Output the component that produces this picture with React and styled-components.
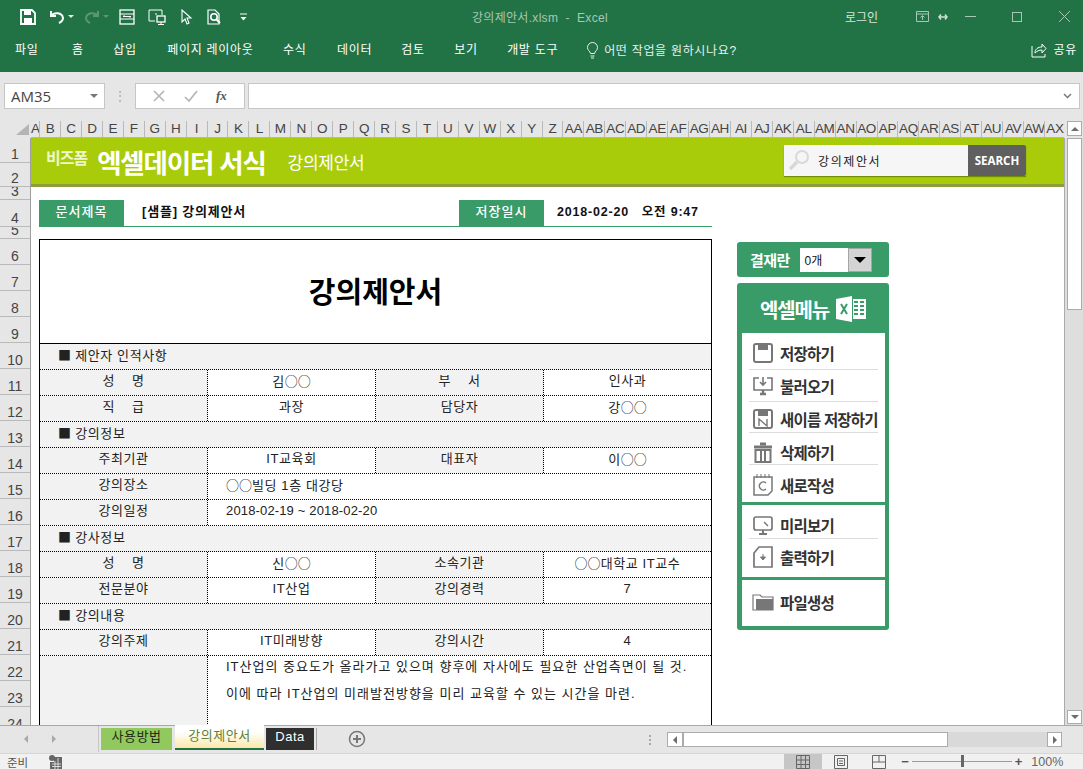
import React from "react";
import styled, { createGlobalStyle } from "styled-components";

const KR = `"Liberation Sans", "Noto Sans CJK KR", sans-serif`;
const GREEN = "#217346";
const SHEET_GREEN = "#389b68";

const GlobalStyle = createGlobalStyle`
  html, body { margin: 0; padding: 0; background: #fff; }
  * { box-sizing: border-box; }
  body { font-family: ${KR}; font-size: 12px; color: #111; }
`;

const Window = styled.div`
  width: 1083px;
  height: 769px;
  display: flex;
  flex-direction: column;
  overflow: hidden;
`;

/* title bar */
const TitleBar = styled.div`
  height: 33px;
  flex: none;
  background: ${GREEN};
  display: grid;
  grid-template-columns: 472px 373px 71px 1fr;
  align-items: center;
`;
const QuickBar = styled.div`
  display: flex;
  align-items: center;
  padding-left: 20px;
  gap: 13px;
`;
const Caret = styled.span`
  width: 0;
  height: 0;
  margin: 0 -3px 0 -10px;
  border: 3px solid transparent;
  border-top: 3px solid ${(p) => (p.$dim ? "#5c9676" : "#e6f0ea")};
  border-bottom: 0;
`;
const Customize = styled.span`
  display: flex;
  margin-left: 5px;
`;
const DocName = styled.div`
  color: #a8c7b5;
  font-size: 12px;
  letter-spacing: 0.3px;
  white-space: pre;
`;
const Login = styled.div`
  color: #d5e5dc;
  font-size: 12px;
`;
const WinControls = styled.div`
  display: flex;
  align-items: center;
  position: relative;
  height: 33px;
`;
const WinBtn = styled.span`
  display: flex;
  width: ${(p) => p.$w}px;
  color: #a8c7b5;
`;

/* ribbon tabs */
const RibbonBar = styled.div`
  height: 39px;
  flex: none;
  background: ${GREEN};
  display: flex;
  align-items: flex-start;
  padding: 9px 6px 0 15px;
  color: #fff;
  font-size: 12px;
  line-height: 16px;
  letter-spacing: 0.7px;
`;
const RibbonTab = styled.span`
  margin-right: ${(p) => p.$gap ?? 29.5}px;
  white-space: nowrap;
`;
const TellMe = styled.span`
  display: flex;
  align-items: center;
  gap: 5px;
  color: #e8f1ec;
`;
const Share = styled.span`
  margin-left: auto;
  display: flex;
  align-items: center;
  gap: 7px;
`;

/* formula bar */
const FormulaBar = styled.div`
  height: 48px;
  flex: none;
  background: #e6e6e6;
  display: flex;
  padding: 11px 3px 11px 4px;
  align-items: stretch;
`;
const NameBox = styled.div`
  width: 101px;
  background: #fff;
  border: 1px solid #c6c6c6;
  display: flex;
  align-items: center;
  justify-content: space-between;
  padding: 0 6px;
  font: 15px "Open Sans", sans-serif;
  color: #444;
`;
const SmallArrow = styled.span`
  width: 0;
  height: 0;
  border: 4px solid transparent;
  border-top: 4px solid #777;
  border-bottom: 0;
`;
const Grip = styled.div`
  width: 30px;
  display: flex;
  justify-content: center;
  align-items: center;
  color: #aaa;
  font-size: 12px;
`;
const FxBox = styled.div`
  width: 110px;
  background: #fff;
  border: 1px solid #c6c6c6;
  display: flex;
  align-items: center;
  justify-content: space-around;
  padding: 0 8px;
  margin-right: 3px;
`;
const FxMark = styled.span`
  font: italic bold 13px "Liberation Serif", serif;
  color: #555;
`;
const FormulaInput = styled.div`
  flex: 1;
  background: #fff;
  border: 1px solid #c6c6c6;
  display: flex;
  align-items: center;
  justify-content: flex-end;
  padding-right: 7px;
`;

/* column header */
const ColHeader = styled.div`
  height: 18px;
  flex: none;
  display: flex;
  background: #e6e6e6;
`;
const Corner = styled.div`
  width: 31px;
  flex: none;
  display: flex;
  justify-content: flex-end;
  align-items: flex-end;
  padding: 0 2px 3px 0;
`;
const ColTrack = styled.div`
  width: 1033px;
  flex: none;
  display: flex;
  overflow: hidden;
  padding-top: 1px;
  border-bottom: 1px solid #b5b5b5;
`;
const ColCell = styled.div`
  width: ${(p) => p.$w}px;
  flex: none;
  border-right: 1px solid #b9b9b9;
  font: 13.5px/16px "Liberation Sans", sans-serif;
  color: #444;
  text-align: center;
  letter-spacing: -0.4px;
  overflow: hidden;
  white-space: nowrap;
`;
const HeaderEnd = styled.div`
  flex: 1;
  padding: 1px 0 0 3px;
  background: #e6e6e6;
`;

/* sheet area */
const SheetArea = styled.div`
  height: 587px;
  flex: none;
  display: flex;
  overflow: hidden;
`;
const RowHeader = styled.div`
  width: 31px;
  flex: none;
  background: #e6e6e6;
  border-right: 1px solid #9f9f9f;
  overflow: hidden;
`;
const RowCell = styled.div`
  height: ${(p) => p.$h}px;
  border-bottom: 1px solid #b9b9b9;
  display: flex;
  align-items: flex-end;
  justify-content: center;
  overflow: hidden;
  font: 14px/16px "Liberation Sans", sans-serif;
  color: #444;
`;
const Sheet = styled.div`
  width: 1033px;
  flex: none;
  background: #fff;
  overflow: hidden;
  display: flex;
  flex-direction: column;
`;
const Banner = styled.div`
  height: 49px;
  flex: none;
  background: #a8cc0a;
  border-bottom: 3px solid #8d9c3c;
  display: flex;
  align-items: center;
  padding: 0 38px 2px 15px;
  color: #fff;
`;
const BrandSmall = styled.span`
  font-size: 16px;
  font-weight: 700;
  color: #eef7c8;
  margin: -6px 10px 0 0;
  letter-spacing: -1px;
`;
const BrandBig = styled.span`
  font-size: 26.5px;
  font-weight: 700;
  letter-spacing: -1.2px;
  margin-top: 2px;
  margin-right: 22px;
`;
const BrandSub = styled.span`
  font-size: 17px;
  letter-spacing: -0.3px;
  margin-top: 3px;
`;
const Search = styled.div`
  margin-left: auto;
  display: flex;
  height: 31px;
  width: 242px;
  box-shadow: 0 1px 1px rgba(0, 0, 0, 0.3);
`;
const SearchField = styled.div`
  flex: 1;
  background: #f6f6f6;
  display: flex;
  align-items: center;
  gap: 8px;
  padding-left: 4px;
  color: #222;
  font-size: 12px;
  letter-spacing: 1.6px;
`;
const SearchButton = styled.div`
  width: 58px;
  background: #5f5f5f;
  color: #fff;
  font: bold 11.5px/31px "Open Sans", sans-serif;
  text-align: center;
  border-radius: 0 2px 2px 0;
`;
const Body = styled.div`
  display: flex;
  padding: 13px 0 0 8px;
`;
const LeftCol = styled.div`
  width: 673px;
  flex: none;
`;
const DocBar = styled.div`
  height: 27px;
  display: flex;
  align-items: flex-start;
  border-bottom: 1px solid ${SHEET_GREEN};
  margin-bottom: 12px;
  font-weight: 700;
  font-size: 13px;
  line-height: 24px;
`;
const DocLabel = styled.div`
  width: 85px;
  height: 26px;
  background: ${SHEET_GREEN};
  color: #fff;
  text-align: center;
  line-height: 24px;
  font-weight: 500;
  font-size: 13px;
  letter-spacing: 1px;
`;
const DocTitle = styled.div`
  width: 335px;
  padding-left: 18px;
  letter-spacing: 0.8px;
`;
const DocDate = styled.div`
  padding-left: 13px;
  white-space: pre;
  font-size: 12.5px;
  letter-spacing: 0.8px;
`;
const Form = styled.div`
  width: 673px;
  border: 1px solid #000;
  border-bottom: 0;
  height: 600px;
  font-size: 13px;
  letter-spacing: 0.6px;
`;
const FormTitle = styled.div`
  height: 104px;
  border-bottom: 1px solid #000;
  display: flex;
  align-items: center;
  justify-content: center;
  font-size: 29px;
  font-weight: 700;
  letter-spacing: 0;
  color: #000;
  padding-bottom: 3px;
`;
const Section = styled.div`
  height: 26px;
  background: #f2f2f2;
  border-bottom: 1px dotted #000;
  padding-left: 18px;
  line-height: 22px;
  white-space: pre;
  color: #222;
`;
const Mark = styled.span`
  font-family: "Noto Sans CJK KR", sans-serif;
  letter-spacing: 0;
`;
const Row = styled.div`
  display: grid;
  grid-template-columns: 168px 168px 168px 1fr;
  height: 26px;
  border-bottom: 1px dotted #000;
`;
const Cell = styled.div`
  grid-column: span ${(p) => p.$span ?? 1};
  background: ${(p) => (p.$label ? "#f2f2f2" : "#fff")};
  border-right: ${(p) => (p.$last ? "0" : "1px dotted #000")};
  text-align: ${(p) => (p.$left ? "left" : "center")};
  padding-left: ${(p) => (p.$left ? "18px" : "0")};
  line-height: 22px;
  white-space: pre;
  color: #222;
  letter-spacing: ${(p) => (p.$tight ? "0.15px" : "inherit")};
`;
const LongRow = styled.div`
  display: grid;
  grid-template-columns: 168px 1fr;
  height: 200px;
`;
const LongLabel = styled.div`
  background: #f2f2f2;
  border-right: 1px dotted #000;
`;
const LongText = styled.div`
  margin-top: -3px;
  padding-left: 18px;
  line-height: 27px;
  letter-spacing: 1px;
  color: #222;
  white-space: nowrap;
`;

/* right panel */
const RightCol = styled.div`
  width: 152px;
  flex: none;
  margin-left: 25px;
  padding-top: 42px;
  display: flex;
  flex-direction: column;
  gap: 6px;
`;
const Approval = styled.div`
  height: 35px;
  background: ${SHEET_GREEN};
  border-radius: 3px;
  display: flex;
  align-items: center;
  padding-left: 13px;
  gap: 9px;
  color: #fff;
  font-weight: 700;
  font-size: 15px;
  letter-spacing: -0.6px;
`;
const Combo = styled.div`
  width: 72px;
  height: 24px;
  margin-left: 1px;
  background: #fff;
  display: flex;
  justify-content: space-between;
  align-items: center;
  padding-left: 5px;
  color: #111;
  font-weight: 400;
  font-size: 12px;
  letter-spacing: 0;
`;
const ComboBtn = styled.div`
  width: 24px;
  height: 24px;
  background: #d4d4d4;
  border: 1px solid #a5a5a5;
  display: flex;
  align-items: center;
  justify-content: center;
`;
const ComboArrow = styled.span`
  width: 0;
  height: 0;
  border: 6px solid transparent;
  border-top: 6px solid #000;
  border-bottom: 0;
`;
const Menu = styled.div`
  height: 347px;
  background: ${SHEET_GREEN};
  border-radius: 3px;
  padding: 0 4px 4px 5px;
  display: flex;
  flex-direction: column;
  gap: 3px;
`;
const MenuHead = styled.div`
  height: 50px;
  flex: none;
  margin-bottom: -3px;
  display: flex;
  align-items: center;
  justify-content: center;
  gap: 7px;
  color: #fff;
  font-size: 20px;
  font-weight: 700;
  letter-spacing: -1.2px;
  padding: 2px 1px 0 0;
`;
const MenuGroup = styled.div`
  background: #fff;
  display: flex;
  flex-direction: column;
  padding: 0 7px;
  height: ${(p) => p.$h}px;
  flex: none;
`;
const MenuItem = styled.div`
  height: ${(p) => p.$h}px;
  flex: none;
  display: flex;
  align-items: center;
  gap: 6px;
  border-bottom: ${(p) => (p.$end ? "0" : "1px solid #dcdcdc")};
  color: #333;
  font-size: 15.5px;
  font-weight: 700;
  letter-spacing: -0.8px;
  white-space: nowrap;
  padding: ${(p) => p.$pt ?? 0}px 0 ${(p) => p.$pb ?? 0}px 3px;
`;

/* vertical scrollbar */
const VScroll = styled.div`
  flex: 1;
  background: #dedede;
  border-left: 1px solid #ababab;
  padding: 0 1px 1px 2px;
  display: flex;
  flex-direction: column;
`;
const VThumb = styled.div`
  height: 172px;
  width: 15px;
  background: #fff;
  border: 1px solid #ababab;
`;
const ScrollBtn = styled.div`
  width: ${(p) => p.$w}px;
  height: ${(p) => p.$h}px;
  background: #fff;
  border: 1px solid #ababab;
  display: flex;
  align-items: center;
  justify-content: center;
  flex: none;
`;
const DownBtn = styled(ScrollBtn)`
  margin-top: auto;
`;
const Tri = styled.span`
  width: 0;
  height: 0;
  border: 4px solid transparent;
  ${(p) => `border-${p.$to}: 0;`}
  ${(p) =>
    `border-${{ up: "bottom", down: "top", left: "right", right: "left" }[p.$dir]}: 4px solid #6d6d6d;`}
`;

/* sheet tabs */
const TabBar = styled.div`
  height: 28px;
  flex: none;
  background: #e6e6e6;
  border-top: 1px solid #a8a8a8;
  display: flex;
  align-items: flex-start;
  position: relative;
`;
const TabNav = styled.div`
  width: 99px;
  height: 26px;
  display: flex;
  align-items: center;
  gap: 24px;
  padding-left: 24px;
  border-right: 1px solid #a8a8a8;
  flex: none;
  opacity: 0.5;
`;
const SheetTab = styled.div`
  height: ${(p) => (p.$active ? 25 : 22)}px;
  margin: ${(p) => (p.$active ? "-1px 0 0 3px" : "2px 0 0 2px")};
  width: ${(p) => p.$w}px;
  flex: none;
  text-align: center;
  font-size: 13px;
  letter-spacing: 0.5px;
  line-height: ${(p) => (p.$active ? 21 : 18)}px;
  background: ${(p) => p.$bg};
  color: ${(p) => p.$fg};
  border-bottom: ${(p) => (p.$active ? `2px solid ${GREEN}` : "0")};
`;
const TabEnd = styled.div`
  height: 22px;
  margin: 2px 0 0 2px;
  border-left: 1px solid #a8a8a8;
  padding-left: 31px;
  width: 330px;
  flex: none;
  display: flex;
  align-items: center;
`;
const TabGrip = styled.div`
  position: absolute;
  left: 649px;
  top: 9px;
  width: 2px;
  height: 11px;
  background: repeating-linear-gradient(#a8a8a8 0 2px, transparent 2px 4px);
`;
const HScroll = styled.div`
  position: absolute;
  left: 667px;
  top: 6px;
  width: 395px;
  height: 15px;
  display: flex;
  background: #d9d9d9;
`;
const HThumb = styled.div`
  width: 265px;
  background: #fff;
  border: 1px solid #ababab;
  margin-right: auto;
`;

/* status bar */
const StatusBar = styled.div`
  height: 16px;
  flex: none;
  background: #f1f1f1;
  border-top: 1px solid #d6d6d6;
  display: flex;
  align-items: center;
  font-size: 11.5px;
  color: #555;
  padding-left: 7px;
  overflow: hidden;
`;
const MacroIcon = styled.svg`
  margin: 0 722px 0 21px;
  flex: none;
`;
const ViewBtn = styled.div`
  width: 38px;
  height: 16px;
  background: ${(p) => (p.$on ? "#c6c6c6" : "transparent")};
  display: flex;
  align-items: center;
  justify-content: center;
  flex: none;
`;
const ZoomBar = styled.div`
  margin-left: 3px;
  display: flex;
  align-items: center;
  color: #555;
  font: bold 13px "Liberation Sans", sans-serif;
  gap: 3px;
`;
const ZoomTrack = styled.div`
  width: 100px;
  height: 1px;
  background: #9a9a9a;
  position: relative;
`;
const ZoomThumb = styled.span`
  position: absolute;
  left: 49px;
  top: -6px;
  width: 3px;
  height: 12px;
  background: #666;
`;
const ZoomPct = styled.span`
  font: 12.5px "Liberation Sans", sans-serif;
  color: #666;
  margin-left: 6px;
`;

const Ico = ({ w = 16, h = 16, vb = "0 0 16 16", c = "#fff", sw = 1.3, children }) => (
  <svg width={w} height={h} viewBox={vb} fill="none" stroke={c} strokeWidth={sw} style={{ flex: "none" }}>
    {children}
  </svg>
);

const columns = "A B C D E F G H I J K L M N O P Q R S T U V W X Y Z AA AB AC AD AE AF AG AH AI AJ AK AL AM AN AO AP AQ AR AS AT AU AV AW AX".split(" ");
const rowHeights = [25, 24, 13, 27, 12, ...Array(20).fill(26)];

const GREY = "#777";
const menuIcons = {
  save: (
    <Ico w={22} h={22} vb="0 0 22 22" c={GREY} sw={2}>
      <rect x="2" y="2" width="18" height="18" rx="2" />
      <path d="M6 2h10v6H6z" fill={GREY} stroke="none" />
    </Ico>
  ),
  load: (
    <Ico w={22} h={22} vb="0 0 22 22" c={GREY} sw={1.6}>
      <path d="M7 3H2v12h18V3h-5" />
      <path d="M11 2v8M8 7l3 3 3-3" />
      <path d="M8 19h6M11 15v4" strokeWidth="2.4" />
    </Ico>
  ),
  saveAs: (
    <Ico w={22} h={22} vb="0 0 22 22" c={GREY} sw={2}>
      <rect x="2" y="2" width="18" height="18" rx="2" />
      <path d="M6 2h10v6H6z" fill={GREY} stroke="none" />
      <path d="M7 18v-7l8 7v-7" strokeWidth="1.4" />
    </Ico>
  ),
  trash: (
    <Ico w={22} h={24} vb="0 0 22 24" c={GREY} sw={2}>
      <path d="M2 7h18" strokeWidth="3" />
      <path d="M8 4h6" strokeWidth="3" />
      <rect x="3.5" y="10" width="15" height="12" />
      <path d="M9 10v12M13 10v12" />
    </Ico>
  ),
  note: (
    <Ico w={22} h={24} vb="0 0 22 24" c={GREY} sw={1.5}>
      <path d="M2 4h18v14l-4 4H2z" />
      <path d="M5 1v4M9 1v4M13 1v4M17 1v4" strokeWidth="1" />
      <path d="M14 10a4 4 0 1 0 0 6" />
    </Ico>
  ),
  monitor: (
    <Ico w={22} h={22} vb="0 0 22 22" c={GREY} sw={1.7}>
      <rect x="2" y="3" width="18" height="13" rx="2" />
      <path d="M11 16v3M7 20h8" strokeWidth="2" />
      <path d="M12 8l4 4" strokeWidth="1.4" />
    </Ico>
  ),
  print: (
    <Ico w={22} h={24} vb="0 0 22 24" c={GREY} sw={1.7}>
      <path d="M7 2h13v20H2V8z" />
      <path d="M11 9v5M8.5 12h5l-2.5 3z" fill={GREY} strokeWidth="1" />
    </Ico>
  ),
  folder: (
    <Ico w={22} h={20} vb="0 0 22 20" c={GREY} sw={1.2}>
      <path d="M1 3h7l2 2h11v13H1z" />
      <path d="M4 7h17v11H4z" fill={GREY} stroke="none" />
    </Ico>
  ),
};

export default function App() {
  return (
    <Window>
      <GlobalStyle />
      <TitleBar>
        <QuickBar>
          <Ico>
            <path d="M1 1h11l3 3v11H1z" strokeWidth="1.8" />
            <path d="M4 1h7v5H4zM4 9h8v6H4z" fill="#fff" stroke="none" />
          </Ico>
          <Ico>
            <path d="M2 2v5h5" strokeWidth="2" />
            <path d="M2 7c3-4 11-4 12 2 0 3-2 4-4 5" strokeWidth="2" />
          </Ico>
          <Caret />
          <Ico c="#5c9676">
            <path d="M14 2v5H9" strokeWidth="2" />
            <path d="M14 7c-3-4-11-4-12 2 0 3 2 4 4 5" strokeWidth="2" />
          </Ico>
          <Caret $dim />
          <Ico>
            <rect x="1" y="1" width="14" height="14" />
            <path d="M1 5h14M1 10h14M4 7.5h8M4 7.5l1.5-1M12 7.5l-1.5 1" strokeWidth="1" />
          </Ico>
          <Ico w={18} vb="0 0 18 16">
            <path d="M7 12H1V1h13v5" strokeWidth="1" />
            <rect x="9" y="7" width="8" height="6" />
            <path d="M13 13v2M10 15.500h6M8 4v2" strokeWidth="1" />
          </Ico>
          <Ico w={14} vb="0 0 14 16">
            <path d="M3 1v12l3-3 2 5 2-1-2-5h4z" strokeWidth="1.1" />
          </Ico>
          <Ico>
            <path d="M9 1H2v14h11V5z" strokeWidth="1.2" />
            <circle cx="8" cy="8" r="3.200" strokeWidth="1.600" />
            <path d="M10 10l4 4" strokeWidth="2" />
          </Ico>
          <Customize>
            <Ico w={7} h={10} vb="0 0 7 10" sw={1}>
              <path d="M0 2h7" />
              <path d="M0.500 5h6L3.500 8.500z" fill="#fff" stroke="none" />
            </Ico>
          </Customize>
        </QuickBar>
        <DocName>강의제안서.xlsm  -  Excel</DocName>
        <Login>로그인</Login>
        <WinControls>
          <WinBtn $w={22}>
            <Ico w={13} h={11} vb="0 0 13 11" c="#a8c7b5" sw={1}>
              <path d="M.5.5h12v10H.5zM.5 3h12M6.500 9V5M4.500 6.500l2-2 2 2" />
            </Ico>
          </WinBtn>
          <WinBtn $w={27}>
            <Ico w={10} h={8} vb="0 0 10 8" c="#cfe0d6" sw={1.500}>
              <path d="M1 4h8M3 1.500L1 4l2 2.500M7 1.500L9 4 7 6.500" />
            </Ico>
          </WinBtn>
          <WinBtn $w={47}>
            <Ico w={11} h={3} vb="0 0 11 3" c="#a8c7b5" sw={1}>
              <path d="M0 1.500h11" />
            </Ico>
          </WinBtn>
          <WinBtn $w={47}>
            <Ico w={10} h={10} vb="0 0 10 10" c="#a8c7b5" sw={1}>
              <rect x=".5" y=".5" width="9" height="9" />
            </Ico>
          </WinBtn>
          <WinBtn $w={11}>
            <Ico w={11} h={11} vb="0 0 11 11" c="#a8c7b5" sw={1}>
              <path d="M0 0l11 11M11 0L0 11" />
            </Ico>
          </WinBtn>
        </WinControls>
      </TitleBar>

      <RibbonBar>
        <RibbonTab $gap={33.5}>파일</RibbonTab>
        <RibbonTab>홈</RibbonTab>
        <RibbonTab $gap={30.5}>삽입</RibbonTab>
        <RibbonTab>페이지 레이아웃</RibbonTab>
        <RibbonTab $gap={30.5}>수식</RibbonTab>
        <RibbonTab $gap={29}>데이터</RibbonTab>
        <RibbonTab>검토</RibbonTab>
        <RibbonTab>보기</RibbonTab>
        <RibbonTab $gap={28}>개발 도구</RibbonTab>
        <TellMe>
          <Ico w={13} h={17} vb="0 0 13 17" c="#e8f1ec" sw={1}>
            <path d="M4.500 11.500C4 9 1.500 8.500 1.500 5.500a5 5 0 0 1 10 0c0 3-2.500 3.500-3 6zM4.500 14h4M5 16h3" />
          </Ico>
          어떤 작업을 원하시나요?
        </TellMe>
        <Share>
          <Ico w={16} h={15} vb="0 0 16 15" sw={1}>
            <path d="M1 3v11h13v-3M4 10c0-4 3-6 7-6V1l4 4.500L11 10V7c-3 0-5 1-7 3z" />
          </Ico>
          공유
        </Share>
      </RibbonBar>

      <FormulaBar>
        <NameBox>
          AM35
          <SmallArrow />
        </NameBox>
        <Grip>⋮</Grip>
        <FxBox>
          <Ico w={12} h={12} vb="0 0 12 12" c="#b5b5b5" sw={1.700}>
            <path d="M1 1l10 10M11 1L1 11" />
          </Ico>
          <Ico w={14} h={12} vb="0 0 14 12" c="#b5b5b5" sw={1.700}>
            <path d="M1 7l4 4 8-10" />
          </Ico>
          <FxMark>fx</FxMark>
        </FxBox>
        <FormulaInput>
          <Ico w={9} h={6} vb="0 0 9 6" c="#777" sw={1.500}>
            <path d="M1 1l3.500 3.500L8 1" />
          </Ico>
        </FormulaInput>
      </FormulaBar>

      <ColHeader>
        <Corner>
          <svg width="13" height="11" viewBox="0 0 13 11">
            <path d="M13 0v11H0z" fill="#b5b5b5" />
          </svg>
        </Corner>
        <ColTrack>
          {columns.map((c, i) => (
            <ColCell key={c} $w={i === 0 ? 9 : 20.94}>
              {c}
            </ColCell>
          ))}
        </ColTrack>
        <HeaderEnd>
          <ScrollBtn $w={15} $h={15}>
            <Tri $dir="up" $to="top" />
          </ScrollBtn>
        </HeaderEnd>
      </ColHeader>

      <SheetArea>
        <RowHeader>
          {rowHeights.map((h, i) => (
            <RowCell key={i} $h={h}>
              {i + 1}
            </RowCell>
          ))}
        </RowHeader>
        <Sheet>
          <Banner>
            <BrandSmall>비즈폼</BrandSmall>
            <BrandBig>엑셀데이터 서식</BrandBig>
            <BrandSub>강의제안서</BrandSub>
            <Search>
              <SearchField>
                <Ico w={22} h={22} vb="0 0 22 22" c="#d8d8d8" sw={2}>
                  <circle cx="14" cy="8" r="6" />
                  <path d="M9 13l-7 7" strokeWidth="3.500" />
                </Ico>
                강의제안서
              </SearchField>
              <SearchButton>SEARCH</SearchButton>
            </Search>
          </Banner>
          <Body>
            <LeftCol>
              <DocBar>
                <DocLabel>문서제목</DocLabel>
                <DocTitle>[샘플] 강의제안서</DocTitle>
                <DocLabel>저장일시</DocLabel>
                <DocDate>2018-02-20   오전 9:47</DocDate>
              </DocBar>
              <Form>
                <FormTitle>강의제안서</FormTitle>
                <Section><Mark>■</Mark> 제안자 인적사항</Section>
                <Row>
                  <Cell $label>성    명</Cell>
                  <Cell>김<Mark>○○</Mark></Cell>
                  <Cell $label>부    서</Cell>
                  <Cell $last>인사과</Cell>
                </Row>
                <Row>
                  <Cell $label>직    급</Cell>
                  <Cell>과장</Cell>
                  <Cell $label>담당자</Cell>
                  <Cell $last>강<Mark>○○</Mark></Cell>
                </Row>
                <Section><Mark>■</Mark> 강의정보</Section>
                <Row>
                  <Cell $label>주최기관</Cell>
                  <Cell>IT교육회</Cell>
                  <Cell $label>대표자</Cell>
                  <Cell $last>이<Mark>○○</Mark></Cell>
                </Row>
                <Row>
                  <Cell $label>강의장소</Cell>
                  <Cell $span={3} $left $last>
                    <Mark>○○</Mark>빌딩 1층 대강당
                  </Cell>
                </Row>
                <Row>
                  <Cell $label>강의일정</Cell>
                  <Cell $span={3} $left $last $tight>
                    2018-02-19 ~ 2018-02-20
                  </Cell>
                </Row>
                <Section><Mark>■</Mark> 강사정보</Section>
                <Row>
                  <Cell $label>성    명</Cell>
                  <Cell>신<Mark>○○</Mark></Cell>
                  <Cell $label>소속기관</Cell>
                  <Cell $last><Mark>○○</Mark>대학교 IT교수</Cell>
                </Row>
                <Row>
                  <Cell $label>전문분야</Cell>
                  <Cell>IT산업</Cell>
                  <Cell $label>강의경력</Cell>
                  <Cell $last>7</Cell>
                </Row>
                <Section><Mark>■</Mark> 강의내용</Section>
                <Row>
                  <Cell $label>강의주제</Cell>
                  <Cell>IT미래방향</Cell>
                  <Cell $label>강의시간</Cell>
                  <Cell $last>4</Cell>
                </Row>
                <LongRow>
                  <LongLabel />
                  <LongText>
                    IT산업의 중요도가 올라가고 있으며 향후에 자사에도 필요한 산업측면이 될 것.
                    <br />
                    이에 따라 IT산업의 미래발전방향을 미리 교육할 수 있는 시간을 마련.
                  </LongText>
                </LongRow>
              </Form>
            </LeftCol>
            <RightCol>
              <Approval>
                결재란
                <Combo>
                  0개
                  <ComboBtn>
                    <ComboArrow />
                  </ComboBtn>
                </Combo>
              </Approval>
              <Menu>
                <MenuHead>
                  엑셀메뉴
                  <svg width="30" height="26" viewBox="0 0 30 26">
                    <path d="M0 3l16-3v26L0 23z" fill="#fff" />
                    <path d="M17 3h13v20H17z" fill="#fff" />
                    <path d="M18 6h4M24 6h4M18 10h4M24 10h4M18 14h4M24 14h4M18 18h4M24 18h4" stroke={SHEET_GREEN} strokeWidth="2" />
                    <path d="M5 8l6 10M11 8L5 18" stroke={SHEET_GREEN} strokeWidth="2" />
                  </svg>
                </MenuHead>
                <MenuGroup $h={169}>
                  <MenuItem $h={37} $pt={3}>{menuIcons.save}저장하기</MenuItem>
                  <MenuItem $h={32}>{menuIcons.load}불러오기</MenuItem>
                  <MenuItem $h={31} $pt={3}>{menuIcons.saveAs}새이름 저장하기</MenuItem>
                  <MenuItem $h={32} $pt={7}>{menuIcons.trash}삭제하기</MenuItem>
                  <MenuItem $h={37} $pt={3} $end>{menuIcons.note}새로작성</MenuItem>
                </MenuGroup>
                <MenuGroup $h={72}>
                  <MenuItem $h={34} $pt={6}>{menuIcons.monitor}미리보기</MenuItem>
                  <MenuItem $h={38} $pb={3} $end>{menuIcons.print}출력하기</MenuItem>
                </MenuGroup>
                <MenuGroup $h={46}>
                  <MenuItem $h={46} $pb={2} $end>{menuIcons.folder}파일생성</MenuItem>
                </MenuGroup>
              </Menu>
            </RightCol>
          </Body>
        </Sheet>
        <VScroll>
          <VThumb />
          <DownBtn $w={15} $h={14}>
            <Tri $dir="down" $to="bottom" />
          </DownBtn>
        </VScroll>
      </SheetArea>

      <TabBar>
        <TabNav>
          <Tri $dir="left" $to="left" />
          <Tri $dir="right" $to="right" />
        </TabNav>
        <SheetTab $w={71} $bg="#92c95e" $fg="#1c2b10">사용방법</SheetTab>
        <SheetTab $active $w={89} $bg="linear-gradient(#fff 30%, #fbe7a8)" $fg="#5d7f38">강의제안서</SheetTab>
        <SheetTab $w={48} $bg="#2f2f2f" $fg="#fff">Data</SheetTab>
        <TabEnd>
          <Ico w={18} h={18} vb="0 0 18 18" c="#777" sw={1.500}>
            <circle cx="9" cy="9" r="7.500" />
            <path d="M9 5v8M5 9h8" strokeWidth="2" />
          </Ico>
        </TabEnd>
        <TabGrip />
        <HScroll>
          <ScrollBtn $w={16} $h={15}>
            <Tri $dir="left" $to="left" />
          </ScrollBtn>
          <HThumb />
          <ScrollBtn $w={15} $h={15}>
            <Tri $dir="right" $to="right" />
          </ScrollBtn>
        </HScroll>
      </TabBar>

      <StatusBar>
        <span>준비</span>
        <MacroIcon width="13" height="14" viewBox="0 0 13 14">
          <circle cx="3" cy="3" r="3" fill="#666" />
          <path d="M5 2h8v12H1V7h4z" fill="#666" />
          <path d="M3 9h9M3 11.500h9M6 6v8M9 3v11" stroke="#f1f1f1" strokeWidth=".8" />
        </MacroIcon>
        <ViewBtn $on>
          <Ico w={14} h={14} vb="0 0 14 14" c="#666" sw={1}>
            <path d="M.5.5h13v13H.5zM.5 5h13M.5 9.500h13M5 .5v13M9.500.5v13" />
          </Ico>
        </ViewBtn>
        <ViewBtn>
          <Ico w={14} h={14} vb="0 0 14 14" c="#666" sw={1}>
            <path d="M.5.5h13v13H.5zM3.500 3.500h7v7h-7zM5 6h4M5 8.500h4" />
          </Ico>
        </ViewBtn>
        <ViewBtn>
          <Ico w={14} h={14} vb="0 0 14 14" c="#666" sw={1}>
            <path d="M.5.5h13v13H.5zM.5 7h13M7 .5V7" />
          </Ico>
        </ViewBtn>
        <ZoomBar>
          −
          <ZoomTrack>
            <ZoomThumb />
          </ZoomTrack>
          +
          <ZoomPct>100%</ZoomPct>
        </ZoomBar>
      </StatusBar>
    </Window>
  );
}
